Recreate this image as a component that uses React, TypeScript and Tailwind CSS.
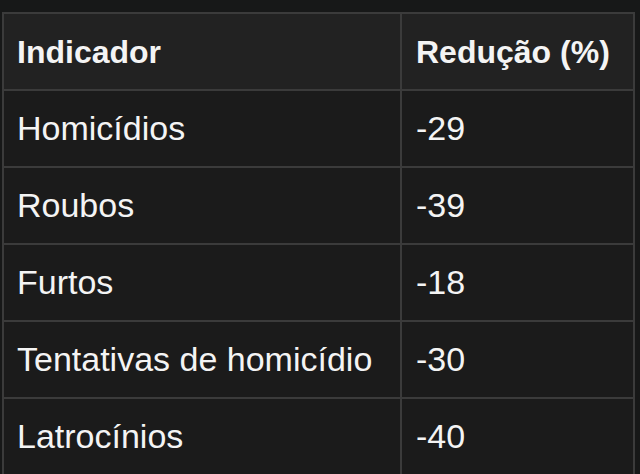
import React from "react";

const rows: [string, string][] = [
  ["Homicídios", "-29"],
  ["Roubos", "-39"],
  ["Furtos", "-18"],
  ["Tentativas de homicídio", "-30"],
  ["Latrocínios", "-40"],
];

export default function App() {
  return (
    <div
      className="w-[640px] h-[474px] overflow-hidden bg-[#171818] pt-[12px] pl-[2px]"
      style={{ fontFamily: '"Liberation Sans", Arial, Helvetica, sans-serif' }}
    >
      <table className="border-collapse table-fixed w-[631px] text-[#f4f4f4]">
        <colgroup>
          <col className="w-[398px]" />
          <col className="w-[233px]" />
        </colgroup>
        <thead>
          <tr className="bg-[#222222]">
            <th className="h-[77px] border-2 border-[#3b3b3b] pl-[13px] text-left text-[32px] font-bold align-middle">
              Indicador
            </th>
            <th className="h-[77px] border-2 border-[#3b3b3b] pl-[14px] text-left text-[32px] font-bold align-middle">
              Redução (%)
            </th>
          </tr>
        </thead>
        <tbody>
          {rows.map(([a, b]) => (
            <tr key={a} className="bg-[#1b1b1b]">
              <td className="h-[77px] border-2 border-[#3b3b3b] pl-[13px] text-[34px] align-middle">
                {a}
              </td>
              <td className="h-[77px] border-2 border-[#3b3b3b] pl-[14px] text-[34px] align-middle">
                {b}
              </td>
            </tr>
          ))}
        </tbody>
      </table>
    </div>
  );
}
